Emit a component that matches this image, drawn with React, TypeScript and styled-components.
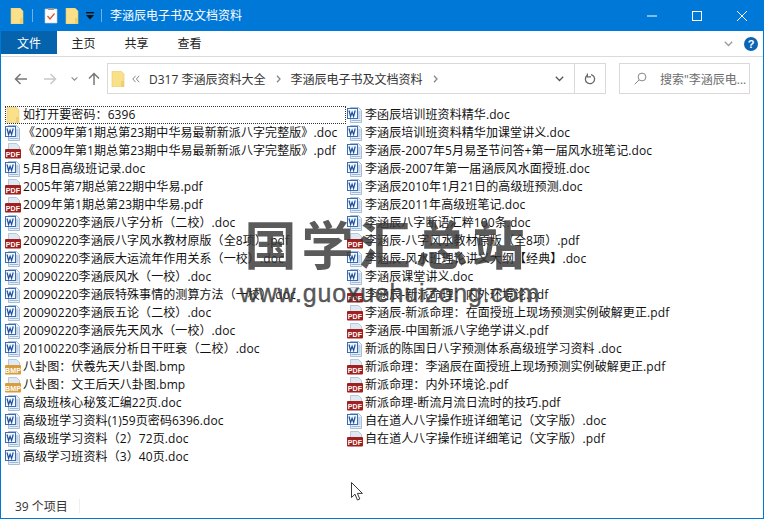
import React from "react";
import styled, { createGlobalStyle } from "styled-components";

const GlobalStyle = createGlobalStyle`
  html, body {
    margin: 0;
    padding: 0;
    background: #fff;
  }
  * {
    box-sizing: border-box;
  }
`;

const Window = styled.div`
  position: relative;
  width: 764px;
  height: 519px;
  display: flex;
  flex-direction: column;
  overflow: hidden;
  background: #fff;
  border: 1px solid #0078d7;
  border-top: 0;
  font-family: "Open Sans", "Noto Sans CJK SC", sans-serif;
  font-size: 12px;
  color: #111;
`;

const TitleBar = styled.div`
  height: 31px;
  margin: 0 -1px;
  background: #0078d7;
  display: flex;
  align-items: center;
  padding-left: 9px;
  color: #fff;
  flex-shrink: 0;
`;

const QuickIcon = styled.span<{ $gap?: number }>`
  display: flex;
  margin-right: ${(p) => p.$gap ?? 0}px;
`;

const Sep = styled.span<{ $after: number }>`
  width: 1px;
  height: 13px;
  background: #6db2ea;
  margin-right: ${(p) => p.$after}px;
`;

const Title = styled.span`
  font-size: 12px;
  line-height: 31px;
  color: #fff;
  flex: 1;
`;

const WinButton = styled.span`
  width: 45px;
  height: 31px;
  display: flex;
  align-items: center;
  justify-content: center;
`;

const RibbonTabs = styled.div`
  height: 26px;
  display: flex;
  align-items: flex-start;
  border-bottom: 1px solid #dadbdc;
  flex-shrink: 0;
  padding-right: 5px;
`;

const Tab = styled.div<{ $active?: boolean }>`
  width: ${(p) => (p.$active ? 56 : 53)}px;
  height: 23px;
  display: flex;
  align-items: center;
  justify-content: center;
  background: ${(p) => (p.$active ? "#0563ad" : "transparent")};
  color: ${(p) => (p.$active ? "#fff" : "#222")};
  font-size: 12px;
`;

const RibbonEnd = styled.div`
  margin-left: auto;
  height: 25px;
  display: flex;
  align-items: center;
  gap: 11px;
`;

const Help = styled.span`
  width: 14px;
  height: 14px;
  border-radius: 50%;
  background: #0c64b4;
  color: #fff;
  font: bold 11px/14px "Liberation Sans", sans-serif;
  text-align: center;
`;

const NavBar = styled.div`
  height: 47px;
  display: flex;
  align-items: flex-start;
  padding: 6px 0 0 3px;
  flex-shrink: 0;
`;

const NavButton = styled.span<{ $width: number }>`
  width: ${(p) => p.$width}px;
  height: 31px;
  display: flex;
  align-items: center;
  justify-content: center;
`;

const AddressBar = styled.div`
  width: 499px;
  height: 31px;
  margin-left: 3px;
  border: 1px solid #d9d9d9;
  display: flex;
  align-items: center;
  padding-left: 2px;
  color: #333;
`;

const Crumb = styled.span`
  margin-left: 9px;
  white-space: nowrap;
`;

const CrumbArrow = styled.span<{ $left: number }>`
  display: flex;
  margin-left: ${(p) => p.$left}px;
`;

const AddressDrop = styled.span`
  margin-left: auto;
  width: 29px;
  display: flex;
  justify-content: center;
`;

const Refresh = styled.span`
  width: 31px;
  height: 29px;
  border-left: 1px solid #d9d9d9;
  display: flex;
  align-items: center;
  justify-content: center;
`;

const SearchBox = styled.div`
  width: 131px;
  height: 31px;
  margin-left: 13px;
  border: 1px solid #d9d9d9;
  display: flex;
  align-items: center;
  padding-left: 14px;
  gap: 13px;
  color: #6d6d6d;
  white-space: nowrap;
`;

const FileArea = styled.div`
  flex: 1;
  display: grid;
  grid-template-columns: 342px 1fr;
  padding: 2px 0 0 3px;
  align-content: start;
`;

const Column = styled.div`
  display: flex;
  flex-direction: column;
`;

const FileRow = styled.div<{ $focused?: boolean }>`
  height: 18px;
  display: flex;
  align-items: center;
  gap: 2px;
  padding-left: ${(p) => (p.$focused ? 0 : 1)}px;
  margin-left: ${(p) => (p.$focused ? 1 : 0)}px;
  white-space: nowrap;
  line-height: 18px;
  letter-spacing: 0.09px;
  outline: ${(p) => (p.$focused ? "1px dotted #333" : "none")};
  outline-offset: -1px;
  width: ${(p) => (p.$focused ? "341px" : "auto")};
`;

const FileIconBox = styled.span`
  width: 16px;
  height: 16px;
  display: flex;
  flex-shrink: 0;
`;

const StatusBar = styled.div`
  height: 24px;
  padding-left: 14px;
  display: flex;
  align-items: center;
  color: #333;
  flex-shrink: 0;
`;

const StatusDivider = styled.span`
  width: 1px;
  height: 14px;
  margin-left: 11px;
  background: #eee;
`;

const Watermark = styled.div`
  position: absolute;
  left: 229px;
  top: 206px;
  width: 320px;
  display: flex;
  flex-direction: column;
  align-items: center;
  pointer-events: none;
  color: rgba(55, 55, 55, 0.82);
`;

const WatermarkTitle = styled.div`
  font-family: "Noto Sans CJK SC", sans-serif;
  font-size: 52px;
  line-height: 74px;
  font-weight: 700;
  letter-spacing: 5px;
  margin-left: -6px;
  white-space: nowrap;
`;

const WatermarkUrl = styled.div`
  font-family: "Liberation Sans", sans-serif;
  font-size: 25px;
  line-height: 26px;
  letter-spacing: 0.8px;
  white-space: nowrap;
  -webkit-text-stroke: 0.4px rgba(55, 55, 55, 0.82);
`;

const Cursor = styled.svg`
  position: absolute;
  left: 350px;
  top: 482px;
`;

const FolderIcon = () => (
  <svg width="16" height="16" viewBox="0 0 16 16">
    <path d="M2 0h9l3 3v13H2z" fill="#fbe08a" stroke="#e6c874" strokeWidth="0.6" />
    <path d="M11 16v-6h3v6z" fill="#f0cf6e" />
  </svg>
);

const PageBase = () => (
  <path d="M3.5 .5h8l3 3v12h-11z" fill="#e6f0fa" stroke="#93aecb" strokeWidth="0.8" />
);

const DocIcon = () => (
  <svg width="16" height="16" viewBox="0 0 16 16">
    <PageBase />
    <path d="M11 5h2.5M11 7h2.5M11 9h2.5M11 11h2.5M4.5 13.5h9" stroke="#8faacb" strokeWidth="0.8" />
    <rect x="0.5" y="1.5" width="10" height="10" fill="#f4f8fd" stroke="#3a6db5" />
    <path d="M2 3.5l1.6 6 1.5-4.2 1.5 4.2 1.6-6" fill="none" stroke="#1c4f9e" strokeWidth="1.2" />
  </svg>
);

const TagIcon = ({ label, bg }: { label: string; bg: string }) => (
  <svg width="16" height="16" viewBox="0 0 16 16">
    <path d="M3.5 .5h8l3 3v9h-11z" fill="#dfe9f4" stroke="#a9bdd2" strokeWidth="0.8" />
    <rect x="0" y="6" width="16" height="9.5" fill={bg} rx="1" />
    <text x="8" y="13.6" fontSize="7" fontWeight="700" textAnchor="middle" fill="#fff" fontFamily="Liberation Sans, sans-serif">
      {label}
    </text>
  </svg>
);

type Kind = "doc" | "pdf" | "bmp" | "folder";

const FileIcon = ({ kind }: { kind: Kind }) => {
  if (kind === "doc") return <DocIcon />;
  if (kind === "pdf") return <TagIcon label="PDF" bg="#a01f1f" />;
  if (kind === "bmp") return <TagIcon label="BMP" bg="#d99c3c" />;
  return <FolderIcon />;
};

const kindOf = (name: string): Kind => {
  if (name.endsWith(".doc")) return "doc";
  if (name.endsWith(".pdf")) return "pdf";
  if (name.endsWith(".bmp")) return "bmp";
  return "folder";
};

const leftFiles = [
  "如打开要密码：6396",
  "《2009年第1期总第23期中华易最新新派八字完整版》.doc",
  "《2009年第1期总第23期中华易最新新派八字完整版》.pdf",
  "5月8日高级班记录.doc",
  "2005年第7期总第22期中华易.pdf",
  "2009年第1期总第23期中华易.pdf",
  "20090220李涵辰八字分析（二校）.doc",
  "20090220李涵辰八字风水教材原版（全8项）.pdf",
  "20090220李涵辰大运流年作用关系（一校）.doc",
  "20090220李涵辰风水（一校）.doc",
  "20090220李涵辰特殊事情的测算方法（一校）.doc",
  "20090220李涵辰五论（二校）.doc",
  "20090220李涵辰先天风水（一校）.doc",
  "20100220李涵辰分析日干旺衰（二校）.doc",
  "八卦图：伏羲先天八卦图.bmp",
  "八卦图：文王后天八卦图.bmp",
  "高级班核心秘笈汇编22页.doc",
  "高级班学习资料(1)59页密码6396.doc",
  "高级班学习资料（2）72页.doc",
  "高级学习班资料（3）40页.doc",
];

const rightFiles = [
  "李函辰培训班资料精华.doc",
  "李涵辰培训班资料精华加课堂讲义.doc",
  "李涵辰-2007年5月易圣节问答+第一届风水班笔记.doc",
  "李涵辰-2007年第一届涵辰风水面授班.doc",
  "李涵辰2010年1月21日的高级班预测.doc",
  "李涵辰2011年高级班笔记.doc",
  "李涵辰八字断语汇粹100条.doc",
  "李涵辰-八字风水教材原版（全8项）.pdf",
  "李涵辰-风水班理论讲义大纲【经典】.doc",
  "李涵辰课堂讲义.doc",
  "李涵辰-新派命理：内外环境论.pdf",
  "李涵辰-新派命理：在面授班上现场预测实例破解更正.pdf",
  "李涵辰-中国新派八字绝学讲义.pdf",
  "新派的陈国日八字预测体系高级班学习资料 .doc",
  "新派命理：李涵辰在面授班上现场预测实例破解更正.pdf",
  "新派命理：内外环境论.pdf",
  "新派命理-断流月流日流时的技巧.pdf",
  "自在道人八字操作班详细笔记（文字版）.doc",
  "自在道人八字操作班详细笔记（文字版）.pdf",
];

const Chevron = ({ color = "#666", w = 9 }: { color?: string; w?: number }) => (
  <svg width={w} height="6" viewBox="0 0 9 6">
    <path d="M.8.8l3.7 3.7L8.2.8" fill="none" stroke={color} strokeWidth="1.3" />
  </svg>
);

const CrumbSep = () => (
  <svg width="5" height="8" viewBox="0 0 5 8">
    <path d="M1 .8L4 4 1 7.2" fill="none" stroke="#888" strokeWidth="1.3" />
  </svg>
);

export default function App() {
  return (
    <Window>
      <GlobalStyle />
      <TitleBar>
        <QuickIcon $gap={7}>
          <FolderIcon />
        </QuickIcon>
        <Sep $after={11} />
        <QuickIcon $gap={6}>
          <svg width="14" height="16" viewBox="0 0 14 16">
            <path d="M1 1h12v14H1z" fill="#fdfdfd" stroke="#cfcfcf" strokeWidth="0.6" />
            <path d="M3.5 8l2.5 3 4.5-5.5" fill="none" stroke="#d8562c" strokeWidth="1.3" />
            <rect x="4" y="0" width="6" height="2" fill="#9a9a9a" />
          </svg>
        </QuickIcon>
        <QuickIcon $gap={6}>
          <FolderIcon />
        </QuickIcon>
        <QuickIcon $gap={7}>
          <svg width="8" height="8" viewBox="0 0 8 8">
            <path d="M0 0h8v1.4H0z" fill="#111" />
            <path d="M0 3h8L4 7.5z" fill="#111" />
          </svg>
        </QuickIcon>
        <Sep $after={8} />
        <Title>李涵辰电子书及文档资料</Title>
        <WinButton>
          <svg width="10" height="10" viewBox="0 0 10 10">
            <path d="M0 5h10" stroke="#fff" />
          </svg>
        </WinButton>
        <WinButton>
          <svg width="10" height="10" viewBox="0 0 10 10">
            <rect x=".5" y=".5" width="9" height="9" fill="none" stroke="#fff" />
          </svg>
        </WinButton>
        <WinButton>
          <svg width="10" height="10" viewBox="0 0 10 10">
            <path d="M0 0l10 10M10 0L0 10" stroke="#fff" />
          </svg>
        </WinButton>
      </TitleBar>

      <RibbonTabs>
        <Tab $active>文件</Tab>
        <Tab>主页</Tab>
        <Tab>共享</Tab>
        <Tab>查看</Tab>
        <RibbonEnd>
          <Chevron color="#9a9a9a" />
          <Help>?</Help>
        </RibbonEnd>
      </RibbonTabs>

      <NavBar>
        <NavButton $width={32}>
          <svg width="13" height="12" viewBox="0 0 13 12">
            <path d="M13 6H1.5M6.5 1L1.5 6l5 5" fill="none" stroke="#777" strokeWidth="1.5" />
          </svg>
        </NavButton>
        <NavButton $width={28}>
          <svg width="13" height="12" viewBox="0 0 13 12">
            <path d="M0 6h11.5M6.5 1l5 5-5 5" fill="none" stroke="#c9c9c9" strokeWidth="1.5" />
          </svg>
        </NavButton>
        <NavButton $width={20}>
          <Chevron color="#888" w={7} />
        </NavButton>
        <NavButton $width={20}>
          <svg width="12" height="13" viewBox="0 0 12 13">
            <path d="M6 13V1.5M1 6.5l5-5 5 5" fill="none" stroke="#777" strokeWidth="1.5" />
          </svg>
        </NavButton>
        <AddressBar>
          <FolderIcon />
          <CrumbArrow $left={6}>
            <svg width="8" height="8" viewBox="0 0 8 8">
              <path d="M3.6 .8L.8 4l2.8 3.2M7.2 .8L4.4 4l2.8 3.2" fill="none" stroke="#888" />
            </svg>
          </CrumbArrow>
          <Crumb>D317 李涵辰资料大全</Crumb>
          <CrumbArrow $left={11}>
            <CrumbSep />
          </CrumbArrow>
          <Crumb>李涵辰电子书及文档资料</Crumb>
          <CrumbArrow $left={11}>
            <CrumbSep />
          </CrumbArrow>
          <AddressDrop>
            <Chevron color="#555" />
          </AddressDrop>
          <Refresh>
            <svg width="12" height="12" viewBox="0 0 12 12">
              <path d="M7 1.6A4.6 4.6 0 1 1 3 2.6" fill="none" stroke="#666" strokeWidth="1.3" />
              <path d="M3.4 .4v3.4H7" fill="none" stroke="#666" strokeWidth="1.2" />
            </svg>
          </Refresh>
        </AddressBar>
        <SearchBox>
          <svg width="13" height="13" viewBox="0 0 13 13">
            <circle cx="8" cy="5" r="3.9" fill="none" stroke="#888" />
            <path d="M5 8L.8 12.2" stroke="#888" />
          </svg>
          搜索"李涵辰电...
        </SearchBox>
      </NavBar>

      <FileArea>
        <Column>
          {leftFiles.map((name, i) => (
            <FileRow key={name} $focused={i === 0}>
              <FileIconBox>
                <FileIcon kind={kindOf(name)} />
              </FileIconBox>
              {name}
            </FileRow>
          ))}
        </Column>
        <Column>
          {rightFiles.map((name) => (
            <FileRow key={name}>
              <FileIconBox>
                <FileIcon kind={kindOf(name)} />
              </FileIconBox>
              {name}
            </FileRow>
          ))}
        </Column>
      </FileArea>

      <StatusBar>
        39 个项目
        <StatusDivider />
      </StatusBar>

      <Watermark>
        <WatermarkTitle>国学汇总站</WatermarkTitle>
        <WatermarkUrl>www.guoxuehuizong.com</WatermarkUrl>
      </Watermark>

      <Cursor width="12" height="20" viewBox="0 0 12 20">
        <path d="M.5.5v15l3.5-3.3 2.4 5.8 2.4-1-2.4-5.6h5z" fill="#fff" stroke="#222" strokeWidth="0.9" />
      </Cursor>
    </Window>
  );
}
